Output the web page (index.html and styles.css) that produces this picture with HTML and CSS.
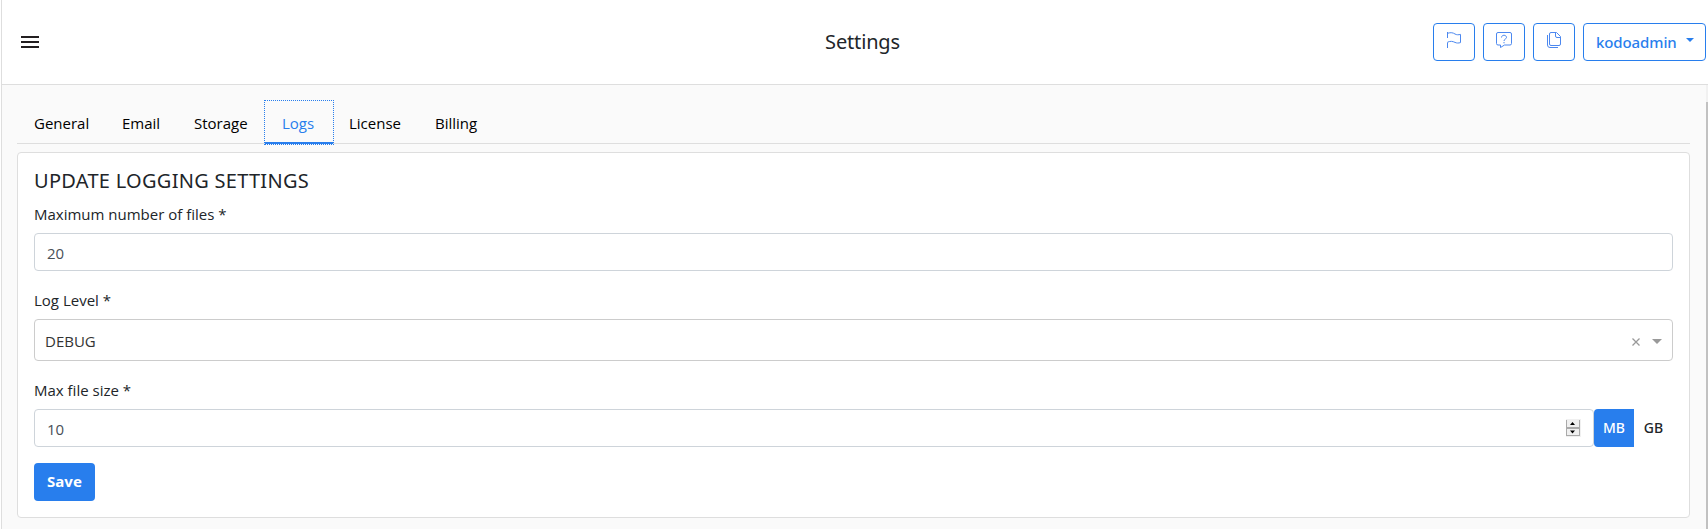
FILE: index.html
```
<!DOCTYPE html>
<html lang="en">
<head>
<meta charset="utf-8">
<title>Settings</title>
<link rel="stylesheet" href="styles.css">
</head>
<body>
<div class="app">
  <header class="header">
    <svg class="menu" width="18" height="12" viewBox="0 0 18 12" fill="#231f20"><path d="M0 0h18v2H0zM0 5h18v2H0zM0 10h18v2H0z"/></svg>
    <h1 class="title"><span class="title-text">Settings</span></h1>
    <div class="actions">
      <button class="icon-btn"><svg width="16" height="16" viewBox="0 0 16 16"><path d="M1.5 16v-5.600M1.500 0v6M1.500 1.300C5 .2 7 .7 9 2c1.700 1 3.500 .9 5.500 .4v8.200c-2 .6-3.800 .6-5.500-.2-2.300-1.100-4.500-1.600-7.500-.2"/></svg></button>
      <button class="icon-btn"><svg width="16" height="16" viewBox="0 0 16 16"><path d="M2 .5h12q1.500 0 1.500 1.500v9.500q0 1.500-1.500 1.500H8.500L4.500 15.500v-2.500H2Q.5 13 .5 11.500V2Q.5 .5 2 .5zM5.500 5.500c0-3 5-3 5 0C10.500 7 8 7 8 9M8 10v1.300"/></svg></button>
      <button class="icon-btn"><svg width="16" height="16" viewBox="0 0 16 16"><path d="M5 .5h5.500l4 4V12q0 1.500-1.500 1.500H5Q3.500 13.500 3.500 12V2Q3.500 .5 5 .5zM9.500 .5v3.500q0 1.500 1.500 1.500h3.500M1.500 3v10q0 2.500 2.500 2.500h8"/></svg></button>
      <button class="user-btn"><span class="user-name">kodoadmin</span><i class="caret"></i></button>
    </div>
  </header>
  <div class="body">
    <main class="content">
      <nav class="tabs">
        <a class="tab general">General</a>
        <a class="tab email">Email</a>
        <a class="tab storage">Storage</a>
        <a class="tab logs">Logs</a>
        <a class="tab license">License</a>
        <a class="tab billing">Billing</a>
      </nav>
      <section class="card">
        <h2 class="heading"><span class="heading-text">UPDATE LOGGING SETTINGS</span></h2>
        <div class="label label-files">Maximum number of files *</div>
        <div class="input">20</div>
        <div class="label label-level">Log Level *</div>
        <div class="select"><span class="value">DEBUG</span>
          <svg class="clear" width="8" height="8" viewBox="0 0 8 8"><path d="M.5 .5l7 7M7.500 .5l-7 7"/></svg>
          <i class="arrow"></i>
        </div>
        <div class="label label-size">Max file size *</div>
        <div class="size-row">
          <div class="input size-input"><span>10</span>
            <svg class="spinner" width="15" height="18" viewBox="0 0 15 18"><path fill="#f0f0f0" d="M0 0h15v18H0z"/><path fill="#aaa" d="M0 1h1v16H0zM13 1h1v16h-1zM0 8h14v2H0zM0 16h14v1H0z"/><path d="M4 6h5L6.500 3zM4 11.500h5L6.500 14.500z"/></svg>
          </div>
          <button class="unit unit-on">MB</button>
          <button class="unit">GB</button>
        </div>
        <button class="save">Save</button>
      </section>
    </main>
    <div class="scrollbar"><div class="thumb"></div></div>
  </div>
</div>
</body>
</html>
```
FILE: styles.css
```
* { box-sizing: border-box; }
body { margin: 0; background: #fff; font-family: "Open Sans", "Noto Sans", sans-serif; font-size: 15px; color: #212529; overflow: hidden; }
button { margin: 0; padding: 0; border: 0; background: none; font-family: "Noto Sans", sans-serif; }
.app { height: 529px; margin-left: 1px; border-left: 1px solid #dedede; display: flex; flex-direction: column; }
.header { height: 85px; flex: none; border-bottom: 1px solid #dedede; display: grid; grid-template-columns: 400px 1fr 400px; align-items: center; padding: 0 2px 0 19px; }
.title { margin: 0 2px 1px 0; font: 400 20px/28px "Noto Sans", sans-serif; text-align: center; }
.title-text { letter-spacing: -.15px; }
.actions { display: flex; justify-content: flex-end; gap: 8px; }
.icon-btn { width: 42px; height: 38px; border: 1px solid #287eed; border-radius: 4px; display: flex; justify-content: center; padding-top: 8px; }
.icon-btn svg { fill: none; stroke: #4c88ef; stroke-width: 1; }
.user-btn { width: 123px; height: 38px; border: 1px solid #287eed; border-radius: 4px; color: #287eed; font-size: 15px; font-weight: 500; display: flex; align-items: center; padding: 0 0 1px 12px; }
.user-name { letter-spacing: -.1px; }
.caret { border: 4px solid transparent; border-top-color: #287eed; border-bottom: 0; margin: -3px 0 0 9px; }
.body { flex: 1; display: flex; background: #fafafa; }
.content { flex: 1; padding: 16px 16px 0 15px; }
.tabs { height: 43px; border-bottom: 1px solid #dedede; display: flex; color: #000; }
.tab { height: 43px; line-height: 45px; padding-left: 17px; }
.general { width: 88px; }
.email { width: 72px; }
.storage { width: 88px; }
.logs { width: 68px; color: #287eed; border-bottom: 2px solid #287eed; outline: 1px dotted #287eed; outline-offset: 0; }
.license { width: 85px; padding-left: 16px; }
.card { margin-top: 8px; height: 366px; border: 1px solid #dedede; border-radius: 4px; background: #fff; padding: 16px 16px 0; }
.heading { margin: 0; font: 400 20px/24px "Noto Sans", sans-serif; letter-spacing: .28px; }
.label { line-height: 24px; }
.label-files { margin: 9px 0 7px; }
.input { height: 38px; border: 1px solid #ced4da; border-radius: 4px; padding: 1px 12px 0; color: #495057; line-height: 36px; }
.label-level { margin: 17px 0 7px; }
.select { height: 42px; border: 1px solid #ccc; border-radius: 4px; display: flex; align-items: center; padding: 3px 10px 0; color: #333; }
.value { flex: 1; padding-bottom: 2px; }
.clear { fill: none; stroke: #999; stroke-width: 1.3; margin-right: 12px; }
.arrow { border: 5px solid transparent; border-top-color: #999; border-bottom: 0; }
.label-size { margin: 17px 0 7px; }
.size-row { display: flex; }
.size-input { flex: 1; display: flex; justify-content: space-between; align-items: center; }
.spinner { margin-top: -2px; }
.unit { width: 39px; height: 38px; padding-bottom: 1px; font-size: 14px; font-weight: 500; color: #212529; }
.unit-on { width: 40px; background: #287eed; color: #fff; border-radius: 4px 0 0 4px; }
.save { margin-top: 16px; width: 61px; height: 38px; padding-bottom: 2px; background: #287eed; color: #fff; border-radius: 4px; font-size: 15px; font-weight: 700; display: block; }
.scrollbar { width: 2px; background: #f1f1f1; padding-top: 17px; }
.thumb { height: 427px; background: #c1c1c1; }
```
